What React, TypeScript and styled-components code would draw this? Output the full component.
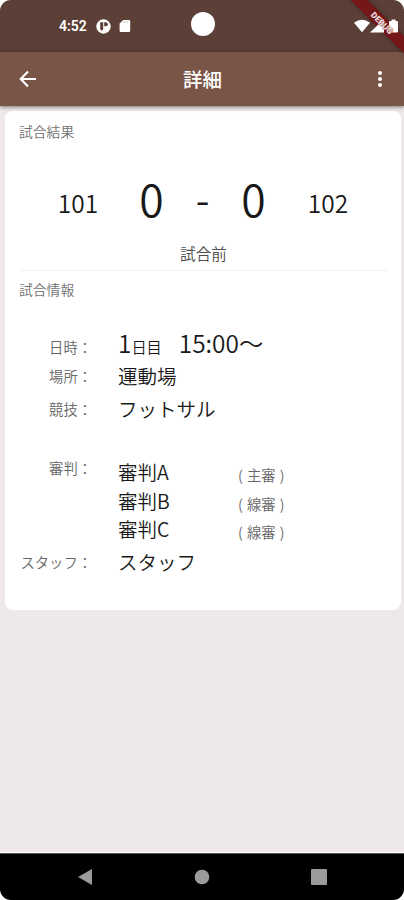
import React from "react";
import styled, { createGlobalStyle } from "styled-components";

const Global = createGlobalStyle`
  * { box-sizing: border-box; }
  html, body { margin: 0; background: #fff; }
  body { font-family: "Noto Sans CJK JP", sans-serif; color: #181818; }
`;

const Screen = styled.div`
  position: relative;
  display: flex;
  flex-direction: column;
  width: 404px;
  height: 900px;
  overflow: hidden;
  border-radius: 11px;
  background: #eee9e8;
`;

const StatusBar = styled.header`
  display: grid;
  grid-template-columns: 1fr 24px 1fr;
  align-items: center;
  flex: none;
  height: 52px;
  padding: 0 6px 4px 59px;
  background: #5c4037;
`;

const StatusLeft = styled.div`
  display: flex;
  align-items: center;
  height: 20px;
  margin-top: 4px;
  color: #fff;
  font: 600 14px/20px Roboto, sans-serif;
  svg:first-of-type { margin-left: 9px; }
  svg:last-of-type { margin-left: 8px; }
`;

const Camera = styled.div`
  width: 24px;
  height: 24px;
  border-radius: 50%;
  background: #fff;
  margin-left: -26px;
`;

const StatusRight = styled.div`
  position: relative;
  z-index: 3;
  display: flex;
  justify-content: flex-end;
  align-items: center;
  margin-top: 4px;
  svg:last-child { margin-left: 5px; }
`;

const AppBar = styled.nav`
  position: relative;
  z-index: 1;
  display: grid;
  grid-template-columns: 56px 1fr 56px;
  align-items: center;
  flex: none;
  height: 54px;
  background: #795548;
  box-shadow: 0 1px 4px rgba(0, 0, 0, 0.5);
`;

const IconButton = styled.button<{ $end?: boolean }>`
  display: flex;
  justify-content: center;
  padding: ${(p) => (p.$end ? "0 0 0 8px" : "0")};
  border: 0;
  background: none;
  color: #fff;
`;

const Title = styled.h1`
  margin: 0;
  padding-left: 1px;
  color: #fff;
  font-size: 19.5px;
  font-weight: 500;
  line-height: 28px;
  text-align: center;
`;

const Diagonal = styled.div`
  position: absolute;
  top: 17px;
  left: 330px;
  width: 104px;
  height: 12px;
  transform: rotate(45deg);
`;

const DebugRibbon = styled(Diagonal)`
  z-index: 2;
  background: #751719;
  box-shadow: 0 0 5px rgba(0, 0, 0, 0.35);
`;

const DebugLabel = styled(Diagonal)`
  z-index: 4;
  color: #eadedd;
  font: 900 8.5px/12px Roboto, sans-serif;
  text-align: center;
  text-shadow: 0 0 1px #751719, 0 0 1px #751719;
`;

const Card = styled.main`
  flex: none;
  width: 396px;
  height: 499px;
  margin: 5px 0 0 5px;
  padding: 9px 13px 0 14px;
  border-radius: 8px;
  background: #fff;
`;

const Heading = styled.h2`
  margin: 0;
  color: #707070;
  font-size: 13.8px;
  font-weight: 350;
  line-height: 22px;
`;

const ScoreRow = styled.div`
  display: grid;
  grid-template-columns: 118px 29px 73px 29px 120px;
  align-items: center;
  height: 60px;
  margin-top: 26px;
`;

const Team = styled.span`
  padding-top: 10px;
  font-size: 24.5px;
  font-weight: 350;
  line-height: 30px;
  text-align: center;
`;

const Score = styled.span<{ $dash?: boolean }>`
  font-size: ${(p) => (p.$dash ? 40 : 44.5)}px;
  font-weight: 350;
  line-height: 50px;
  text-align: center;
`;

const State = styled.p`
  margin: 13px 0 5px;
  color: #4c4c4c;
  font-size: 15.6px;
  font-weight: 350;
  line-height: 24px;
  text-align: center;
`;

const Divider = styled.hr`
  height: 1px;
  margin: 0 0 7px;
  border: 0;
  background: #f2f2f2;
`;

const Row = styled.div<{ $h: number; $top?: number }>`
  display: grid;
  grid-template-columns: 73px 1fr;
  column-gap: 26px;
  align-items: start;
  height: ${(p) => p.$h}px;
  margin-top: ${(p) => p.$top ?? 0}px;
`;

const Label = styled.span<{ $shift?: number }>`
  margin-top: ${(p) => p.$shift ?? 0}px;
  color: #666;
  font-size: 14.3px;
  font-weight: 350;
  line-height: 28px;
  text-align: right;
  white-space: nowrap;
`;

const Value = styled.span`
  font-size: 19.5px;
  font-weight: 350;
  line-height: 28px;
  white-space: nowrap;
`;

const DateTime = styled.span`
  display: flex;
  align-items: baseline;
  font-size: 24.4px;
  font-weight: 350;
  line-height: 28px;
`;

const Unit = styled.span`
  margin-right: 17px;
  font-size: 15.2px;
`;

const Referees = styled.div`
  display: grid;
  grid-template-columns: 120px 1fr;
  grid-auto-rows: 28.5px;
`;

const Role = styled.span`
  padding-top: 3px;
  color: #666;
  font-size: 14.3px;
  font-weight: 350;
  line-height: 28px;
  white-space: pre;
  word-spacing: 1px;
`;

const NavBar = styled.footer`
  display: grid;
  grid-template-columns: repeat(3, 117.4px);
  justify-content: center;
  align-items: center;
  justify-items: center;
  flex: none;
  height: 47px;
  margin-top: auto;
  border-top: 1px solid #555;
  background: #000;
  box-shadow: 0 -1px 0 #fff;
`;

const referees = [
  ["審判A", "主審"],
  ["審判B", "線審"],
  ["審判C", "線審"],
];

export default function App() {
  return (
    <>
      <Global />
      <Screen>
        <StatusBar>
          <StatusLeft>
            4:52
            <svg width="15" height="15" viewBox="0 0 15 15">
              <circle cx="7.5" cy="7.5" r="7.2" fill="#fff" />
              <path d="M4.2 3.2h3v6.3q0 2-1.5 2-1.5 0-1.5-2z" fill="#5c4037" />
              <path d="M8.2 3.2h1.6a2 2 0 0 1 0 4H8.2z" fill="#5c4037" />
            </svg>
            <svg width="12" height="14" viewBox="0 0 12 14">
              <path d="M4.2 1H10q1.2 0 1.2 1.2v9.6q0 1.2-1.2 1.2H1.8Q.6 13 .6 11.8V4.6z" fill="#fff" />
              <path d="M4.4 2.4v1.4M6.5 2.4v1.4M8.6 2.4v1.4" stroke="#b5a8a3" strokeWidth=".8" />
            </svg>
          </StatusLeft>
          <Camera />
          <StatusRight>
            <svg width="16" height="14" viewBox="0 0 16 14">
              <path d="M0 3.8Q8-2.2 16 3.8L8 13.2z" fill="#fff" />
            </svg>
            <svg width="14" height="14" viewBox="0 0 14 14">
              <path d="M0 13.5 14 0v13.5z" fill="#fff" />
            </svg>
            <svg width="9" height="14" viewBox="0 0 9 14">
              <path d="M2.5.5h4V2H8q1 0 1 1v9.5q0 1-1 1H1q-1 0-1-1V3q0-1 1-1h1.5z" fill="#fff" />
            </svg>
          </StatusRight>
        </StatusBar>
        <AppBar>
          <IconButton aria-label="戻る">
            <svg width="24" height="24" viewBox="0 0 24 24">
              <path d="M20 12H5.5M12 4.6 4.7 12l7.3 7.4" fill="none" stroke="#fff" strokeWidth="2.1" />
            </svg>
          </IconButton>
          <Title>詳細</Title>
          <IconButton $end aria-label="メニュー">
            <svg width="24" height="24" viewBox="0 0 24 24" fill="#fff">
              <circle cx="12" cy="6" r="2" />
              <circle cx="12" cy="12" r="2" />
              <circle cx="12" cy="18" r="2" />
            </svg>
          </IconButton>
        </AppBar>
        <Card>
          <Heading>試合結果</Heading>
          <ScoreRow>
            <Team>101</Team>
            <Score>0</Score>
            <Score $dash>-</Score>
            <Score>0</Score>
            <Team>102</Team>
          </ScoreRow>
          <State>試合前</State>
          <Divider />
          <Heading>試合情報</Heading>
          <Row $h={32} $top={29}>
            <Label $shift={4}>日時：</Label>
            <DateTime>
              1<Unit>日目</Unit>15:00〜
            </DateTime>
          </Row>
          <Row $h={33} $top={1}>
            <Label>場所：</Label>
            <Value>運動場</Value>
          </Row>
          <Row $h={33}>
            <Label>競技：</Label>
            <Value>フットサル</Value>
          </Row>
          <Row $h={90} $top={30}>
            <Label $shift={-4}>審判：</Label>
            <Referees>
              {referees.map(([name, role]) => (
                <React.Fragment key={name}>
                  <Value>{name}</Value>
                  <Role>{`( ${role} )`}</Role>
                </React.Fragment>
              ))}
            </Referees>
          </Row>
          <Row $h={28}>
            <Label>スタッフ：</Label>
            <Value>スタッフ</Value>
          </Row>
        </Card>
        <NavBar>
          <svg width="16" height="18" viewBox="0 0 16 18">
            <path d="M15 1v16L1 9z" fill="#9b9b9b" />
          </svg>
          <svg width="16" height="16" viewBox="0 0 16 16">
            <circle cx="8" cy="8" r="7.3" fill="#9b9b9b" />
          </svg>
          <svg width="16" height="16" viewBox="0 0 16 16">
            <rect width="16" height="16" rx="1" fill="#9b9b9b" />
          </svg>
        </NavBar>
        <DebugRibbon />
        <DebugLabel>DEBUG</DebugLabel>
      </Screen>
    </>
  );
}
